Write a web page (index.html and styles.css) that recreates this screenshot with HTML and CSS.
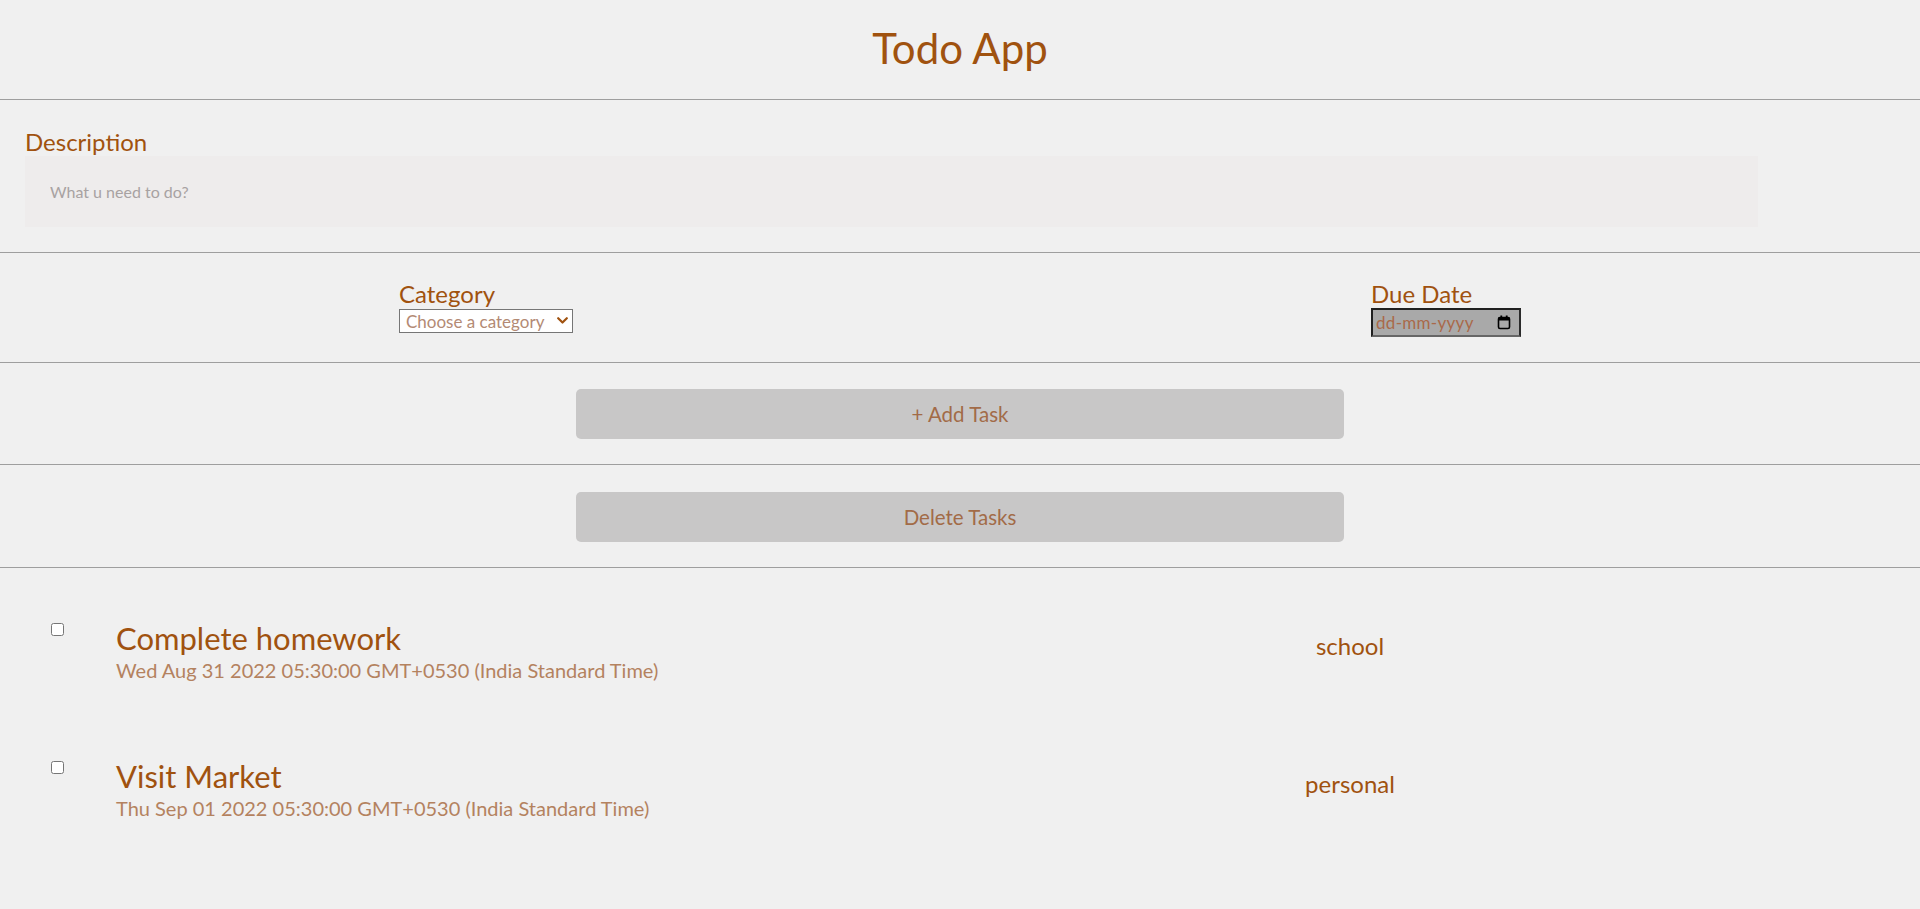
FILE: index.html
```html
<!DOCTYPE html>
<html lang="en">
<head>
<meta charset="utf-8">
<title>Todo App</title>
<link rel="stylesheet" href="styles.css">
</head>
<body>
<header class="header">
  <h1 class="title">Todo App</h1>
</header>
<section class="section section-desc">
  <label class="label" for="desc">Description</label>
  <input class="desc-input" id="desc" type="text" placeholder="What u need to do?">
</section>
<section class="section section-meta">
  <div class="field">
    <label class="label" for="cat">Category</label>
    <div class="select-wrap">
      <select class="cat-select" id="cat">
        <option>Choose a category</option>
        <option>school</option>
        <option>personal</option>
      </select>
      <svg class="chevron" width="11" height="7" viewBox="0 0 11 7" aria-hidden="true">
        <path d="M1.2 1.2 L5.5 5.5 L9.8 1.2" fill="none" stroke="#a0520f" stroke-width="2.2" stroke-linecap="round" stroke-linejoin="round"/>
      </svg>
    </div>
  </div>
  <div class="field">
    <label class="label">Due Date</label>
    <div class="date-input">
      <span class="date-text">dd-mm-yyyy</span>
      <svg class="cal-icon" width="14" height="15" viewBox="0 0 14 15" aria-hidden="true">
        <rect x="1.5" y="2.5" width="11" height="11" rx="1.5" fill="none" stroke="#000" stroke-width="1.6"/>
        <rect x="1.5" y="2.5" width="11" height="3" fill="#000"/>
        <rect x="3.4" y="0.5" width="1.8" height="3" fill="#000"/>
        <rect x="8.8" y="0.5" width="1.8" height="3" fill="#000"/>
      </svg>
    </div>
  </div>
</section>
<section class="section section-btn">
  <button class="action-btn" type="button">+ Add Task</button>
</section>
<section class="section section-btn section-btn2">
  <button class="action-btn" type="button">Delete Tasks</button>
</section>
<main class="tasks">
  <div class="task">
    <input class="task-check" type="checkbox">
    <div class="task-info">
      <div class="task-title">Complete homework</div>
      <div class="task-date">Wed Aug 31 2022 05:30:00 GMT+0530 (India Standard Time)</div>
    </div>
    <div class="task-category">school</div>
  </div>
  <div class="task">
    <input class="task-check" type="checkbox">
    <div class="task-info">
      <div class="task-title">Visit Market</div>
      <div class="task-date">Thu Sep 01 2022 05:30:00 GMT+0530 (India Standard Time)</div>
    </div>
    <div class="task-category">personal</div>
  </div>
</main>
</body>
</html>
```
FILE: styles.css
```css
* { box-sizing: border-box; }

body {
  margin: 0;
  background: #f0f0f0;
  font-family: "Lato", "Open Sans", sans-serif;
  color: #a0520f;
}

.header {
  height: 100px;
  padding-top: 23px;
  border-bottom: 1px solid #9e9e9e;
}

.title {
  margin: 0;
  text-align: center;
  font-size: 42px;
  font-weight: 400;
  line-height: 50px;
  color: #a0520f;
}

.section {
  border-bottom: 1px solid #9e9e9e;
}

.section-desc {
  height: 153px;
  padding: 27px 25px 0;
}

.label {
  display: block;
  font-size: 24px;
  line-height: 29px;
  color: #a0520f;
}

.desc-input {
  display: block;
  box-sizing: content-box;
  width: 90%;
  height: 21px;
  padding: 25px 25px;
  border: none;
  outline: none;
  background: #eeecec;
  font-family: "Lato", sans-serif;
  font-size: 16px;
  color: #8a7a70;
}

.desc-input::placeholder {
  color: #a8a2a2;
}

.section-meta {
  height: 110px;
  padding-top: 26px;
  display: flex;
  justify-content: space-around;
  align-items: flex-start;
}

.field {
  display: flex;
  flex-direction: column;
}

.select-wrap {
  position: relative;
  width: 174px;
  height: 24px;
  margin-top: 1px;
}

.cat-select {
  appearance: none;
  -webkit-appearance: none;
  display: block;
  width: 174px;
  height: 24px;
  padding: 0 20px 0 6px;
  border: 1px solid #767676;
  border-radius: 0;
  background: #fff;
  font-family: "Lato", sans-serif;
  font-size: 17px;
  color: #b38a74;
}

.chevron {
  position: absolute;
  right: 5px;
  top: 8px;
  pointer-events: none;
}

.date-input {
  width: 150px;
  height: 29px;
  display: flex;
  align-items: center;
  justify-content: space-between;
  padding: 0 8px 0 3px;
  background: #a9a9a9;
  border: 2px solid;
  border-color: #202020 #2a2a2a #666 #202020;
}

.date-text {
  font-size: 17px;
  color: #a9694a;
  letter-spacing: 0.3px;
}

.cal-icon {
  display: block;
}

.section-btn {
  height: 102px;
  padding-top: 26px;
  display: flex;
  justify-content: center;
  align-items: flex-start;
}

.section-btn2 {
  height: 103px;
  padding-top: 27px;
}

.action-btn {
  width: 40%;
  height: 50px;
  border: none;
  border-radius: 5px;
  background: #c8c7c7;
  font-family: "Lato", sans-serif;
  font-size: 20.5px;
  color: #a26b47;
  cursor: pointer;
}

.tasks {
  padding-top: 52px;
  display: flex;
  flex-direction: column;
  gap: 76px;
}

.task {
  display: flex;
  align-items: flex-start;
  padding-left: 47px;
}

.task-check {
  width: 13px;
  height: 13px;
  margin: 3px 3px 3px 4px;
  flex: none;
}

.task-info {
  margin-left: 49px;
  width: 1134px;
  flex: none;
}

.task-title {
  font-size: 31px;
  line-height: 36px;
  color: #a0520f;
}

.task-date {
  margin-top: 2px;
  font-size: 20px;
  line-height: 24px;
  color: #b4825f;
}

.task-category {
  width: 200px;
  margin-top: 11px;
  text-align: center;
  font-size: 24px;
  line-height: 29px;
  color: #a0520f;
}
```
